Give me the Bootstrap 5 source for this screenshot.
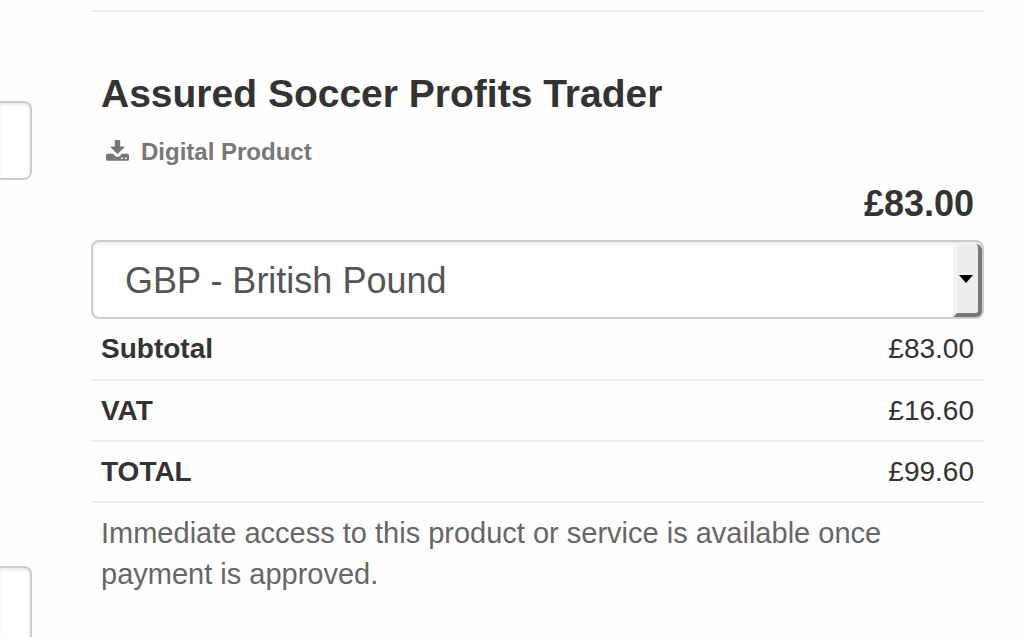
<!DOCTYPE html>
<html lang="en">
<head>
<meta charset="utf-8">
<meta name="viewport" content="width=device-width, initial-scale=1">
<title>Order summary</title>
<link href="https://cdn.jsdelivr.net/npm/bootstrap@5.3.0/dist/css/bootstrap.min.css" rel="stylesheet">
<style>
  body { font-family: "Liberation Sans", Arial, sans-serif; font-size: 28px; line-height: 41px; color: #333; background: #fefefe; }
  .form-side { width: 32px; padding-top: 101px; gap: 386px; }
  .field { height: 79px; border: 2px solid #ccc; border-radius: 8px; box-shadow: inset 0 2px 3px rgba(0,0,0,.09); background-color: #fff; }
  .form-side .field { border-left: 0; border-radius: 0 8px 8px 0; }
  .summary { margin: 10px 40px 0 59px; border-top: 2px solid #eee; padding-top: 58px; }
  .inset-x { padding-left: 10px; padding-right: 10px; }
  .product-name { font-size: 39px; line-height: 48px; }
  .kind { font-size: 24px; line-height: 32px; color: #777; margin-top: 18px; padding-left: 15px; gap: 12px; }
  .price { font-size: 36px; line-height: 48px; margin: 12px 0; }
  .currency { font-size: 36px; line-height: 40px; color: #555; padding: 2px 56px 0 32px; background-image: none; }
  .picker { top: 4px; right: 2px; bottom: 2px; width: 29px; background: #eee; border: solid #777; border-width: 0 4px 4px 0; border-radius: 0 6px 6px 0; box-shadow: inset 4px 0 #f4f4f4; pointer-events: none; }
  .picker::before { content: ""; position: absolute; left: 0; bottom: -4px; border-top: 4px solid #fff; border-right: 4px solid transparent; }
  .totals { font-size: 28px; color: #333; }
  .totals th, .totals td { height: 61px; padding: 0 10px; border-bottom: 2px solid #eee; vertical-align: middle; line-height: 40px; background: none; color: #333; }
  .access-note { font-size: 29px; color: #666; margin-top: 10px; }
</style>
</head>
<body>
<div class="d-flex vh-100 overflow-hidden">
  <form class="form-side d-flex flex-column flex-shrink-0">
    <input class="field form-control flex-shrink-0" type="text" aria-label="First field">
    <input class="field form-control flex-shrink-0" type="text" aria-label="Second field">
  </form>
  <main class="summary flex-grow-1">
    <h1 class="product-name inset-x fw-bold mb-0">Assured Soccer Profits Trader</h1>
    <div class="kind d-flex align-items-center fw-bold">
      <svg width="23" height="26" viewBox="0 0 23 26" fill="#777" aria-hidden="true">
        <path d="M9.500 1h4q.7 0 .7.700V7.500h3.600q1.200 0 .4.900l-6 6.200q-.7.600-1.400 0l-6-6.200Q4 7.500 5.200 7.500h3.600V1.700q0-.7.700-.7z"/>
        <path fill-rule="evenodd" d="M1.500 14.800h5.500l2.200 2.100q2.300 1.800 4.600 0l2.200-2.100h5.500q1.500 0 1.500 1.500v4q0 1.500-1.500 1.500h-20Q0 21.800 0 20.300v-4q0-1.500 1.500-1.500zM15 18.500v1.500h1.800v-1.500zM18.800 18.500v1.500h1.800v-1.500z"/>
      </svg>
      <span>Digital Product</span>
    </div>
    <div class="price inset-x fw-bold text-end">£83.00</div>
    <div class="position-relative">
      <select class="field currency form-select" aria-label="Currency">
        <option selected>GBP - British Pound</option>
        <option>USD - US Dollar</option>
        <option>EUR - Euro</option>
      </select>
      <span class="picker position-absolute d-flex align-items-center justify-content-center">
        <svg width="14" height="8" viewBox="0 0 14 8" aria-hidden="true"><path d="M0 0h14L7 8z"/></svg>
      </span>
    </div>
    <table class="totals table mb-0">
      <tbody>
        <tr><th scope="row">Subtotal</th><td class="text-end">£83.00</td></tr>
        <tr><th scope="row">VAT</th><td class="text-end">£16.60</td></tr>
        <tr><th scope="row">TOTAL</th><td class="text-end">£99.60</td></tr>
      </tbody>
    </table>
    <p class="access-note inset-x mb-0">Immediate access to this product or service is available once payment is approved.</p>
  </main>
</div>
<script src="https://cdn.jsdelivr.net/npm/bootstrap@5.3.0/dist/js/bootstrap.bundle.min.js"></script>
</body>
</html>
